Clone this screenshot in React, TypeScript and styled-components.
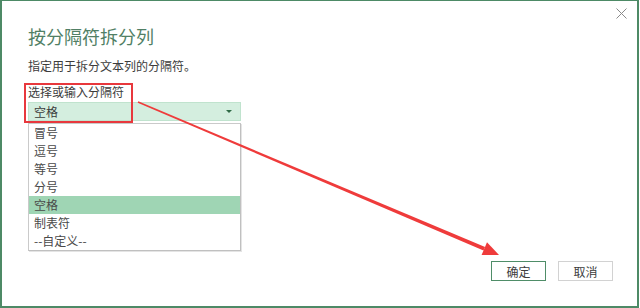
import styled, { createGlobalStyle } from "styled-components";

const GlobalStyle = createGlobalStyle`
  html, body {
    margin: 0;
    padding: 0;
    background: #ffffff;
  }
  body {
    font-family: "Noto Sans CJK SC", "Noto Sans", sans-serif;
  }
`;

const Dialog = styled.div`
  position: relative;
  box-sizing: border-box;
  width: 639px;
  height: 308px;
  display: flex;
  flex-direction: column;
  background: #fff;
  border-top: 1px solid #4d8a66;
  border-left: 2px solid #4d8a66;
  border-right: 2px solid #4d8a66;
  border-bottom: 2px solid #4d8a66;
`;

const TopBar = styled.div`
  display: flex;
  justify-content: flex-end;
  height: 20px;
  padding: 7px 10px 0 0;
  box-sizing: border-box;
`;

const CloseButton = styled.div`
  width: 11px;
  height: 11px;
  display: flex;
  svg {
    display: block;
  }
`;

const Body = styled.div`
  display: flex;
  flex-direction: column;
  align-items: flex-start;
  padding-left: 26px;
`;

const Title = styled.h1`
  margin: 3px 0 0;
  font-size: 18px;
  line-height: 24px;
  font-weight: 400;
  color: #517f65;
`;

const Subtitle = styled.div`
  margin-top: 10px;
  font-size: 12px;
  line-height: 16px;
  color: #3c3c3c;
`;

const Label = styled.div`
  margin-top: 10px;
  font-size: 12px;
  line-height: 16px;
  color: #3c3c3c;
`;

const Combo = styled.div`
  margin-top: 2px;
  box-sizing: border-box;
  width: 213px;
  height: 19px;
  display: flex;
  align-items: center;
  justify-content: space-between;
  padding: 0 8px 0 5px;
  background: #d4eedf;
  border: 1px solid #c0e3ce;
  font-size: 12px;
  color: #3c3c3c;
`;

const Caret = styled.span`
  width: 0;
  height: 0;
  border-left: 3px solid transparent;
  border-right: 3px solid transparent;
  border-top: 3px solid #2f6a46;
`;

const List = styled.div`
  margin-top: 2px;
  box-sizing: border-box;
  width: 213px;
  display: flex;
  flex-direction: column;
  border: 1px solid #cacaca;
  border-right-color: #c0c0c0;
  border-bottom-color: #c0c0c0;
  box-shadow: 1px 1px 0 #e4e4e4;
`;

const Item = styled.div<{ $active?: boolean }>`
  height: 18px;
  line-height: 18px;
  padding-left: 5px;
  font-size: 12px;
  color: #4a4a4a;
  background: ${(p) => (p.$active ? "#9fd5b4" : "transparent")};
`;

const Footer = styled.div`
  margin-top: auto;
  display: flex;
  justify-content: flex-end;
  gap: 12px;
  padding: 0 24px 25px 0;
`;

const Button = styled.div<{ $primary?: boolean }>`
  box-sizing: border-box;
  width: 55px;
  height: 20px;
  display: flex;
  align-items: center;
  justify-content: center;
  font-size: 12px;
  color: #3c3c3c;
  background: #fff;
  border: 1px solid ${(p) => (p.$primary ? "#4f8d68" : "#d2d2d2")};
`;

const Annotation = styled.svg`
  position: absolute;
  left: -2px;
  top: -1px;
  width: 639px;
  height: 308px;
  pointer-events: none;
`;

const separators = ["冒号", "逗号", "等号", "分号", "空格", "制表符", "--自定义--"];

const App = () => {
  return (
    <>
      <GlobalStyle />
      <Dialog>
        <TopBar>
          <CloseButton>
            <svg width="11" height="11" viewBox="0 0 11 11">
              <path d="M0.5 0.5 L10.5 10.5 M10.5 0.5 L0.5 10.5" stroke="#8a8a8a" strokeWidth="1" />
            </svg>
          </CloseButton>
        </TopBar>
        <Body>
          <Title>按分隔符拆分列</Title>
          <Subtitle>指定用于拆分文本列的分隔符。</Subtitle>
          <Label>选择或输入分隔符</Label>
          <Combo>
            <span>空格</span>
            <Caret />
          </Combo>
          <List>
            {separators.map((s) => (
              <Item key={s} $active={s === "空格"}>
                {s}
              </Item>
            ))}
          </List>
        </Body>
        <Footer>
          <Button $primary>确定</Button>
          <Button>取消</Button>
        </Footer>
        <Annotation viewBox="0 0 639 308">
          <rect x="25" y="84" width="107" height="38" fill="none" stroke="#e8383d" strokeWidth="2" />
          <polygon
            points="138.3,101.3 485.1,246.9 483.5,250.5 137.7,102.7"
            fill="#ef3b3b"
          />
          <polygon points="487,242.3 499,255 481.6,255.1" fill="#ef3b3b" />
        </Annotation>
      </Dialog>
    </>
  );
};

export default App;
